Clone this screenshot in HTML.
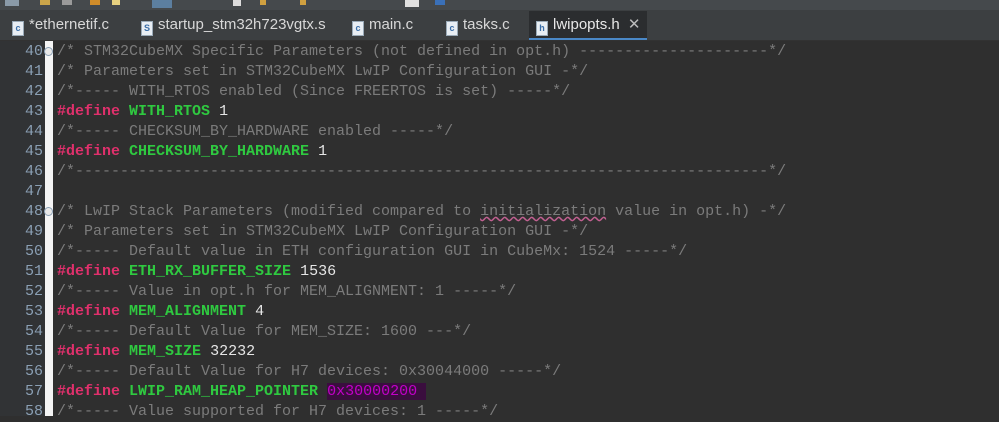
<!DOCTYPE html>
<html><head><meta charset="utf-8">
<style>
html,body{margin:0;padding:0;}
body{width:999px;height:416px;overflow:hidden;background:#2f2f2f;position:relative;font-family:"Liberation Sans",sans-serif;}
#tool{position:absolute;left:0;top:0;width:999px;height:10px;background:#45494c;}
#tabs{position:absolute;left:0;top:10px;width:999px;height:30px;background:#3c3f41;border-bottom:1px solid #323232;}
.tab{position:absolute;top:0;height:30px;line-height:30px;color:#d8d8d8;font-size:15px;white-space:nowrap;}
.ic{display:inline-block;width:10px;height:13px;background:#e8eef4;border:1px solid #9aaab8;vertical-align:-2px;margin-right:5px;font-size:9px;line-height:13px;text-align:center;color:#3a6ea8;font-weight:bold;}
#act{position:absolute;left:529px;top:11px;width:118px;height:29px;background:#2b2d2f;border-bottom:2px solid #4a88c7;box-sizing:border-box;}
#gut{position:absolute;left:0;top:41px;width:45px;height:375px;background:#313335;}
#bar{position:absolute;left:45px;top:41px;width:8px;height:375px;background:#f4f4f4;}
.ln{position:absolute;left:0;width:43px;text-align:right;color:#8a9fb4;font:15px/20px "Liberation Mono",monospace;}
.cd{position:absolute;left:57px;white-space:pre;font:15px/20px "Liberation Mono",monospace;color:#7b7b7b;}
.k{color:#e0306c;font-weight:bold;}
.m{color:#2fc940;font-weight:bold;}
.n{color:#e6e6e6;}
.p{color:#c200c8;background:#3a0e3e;}
.u{text-decoration:underline wavy #c06090;}
.fold{position:absolute;left:44px;width:7px;height:7px;border:1px solid #8a9fb4;border-radius:50%;background:#e8e8e8;}
</style></head><body>
<div id="tool">
<div style="position:absolute;left:5px;top:0;width:14px;height:6px;background:#8a9aa8"></div>
<div style="position:absolute;left:40px;top:0;width:10px;height:5px;background:#c9a44a"></div>
<div style="position:absolute;left:62px;top:0;width:10px;height:5px;background:#9a9a9a"></div>
<div style="position:absolute;left:90px;top:0;width:10px;height:5px;background:#d08c2a"></div>
<div style="position:absolute;left:112px;top:0;width:8px;height:5px;background:#e6d080"></div>
<div style="position:absolute;left:152px;top:0;width:20px;height:8px;background:#5c7fa0"></div>
<div style="position:absolute;left:233px;top:0;width:8px;height:6px;background:#ddd"></div>
<div style="position:absolute;left:260px;top:0;width:6px;height:5px;background:#d0a040"></div>
<div style="position:absolute;left:300px;top:0;width:6px;height:5px;background:#d0a040"></div>
<div style="position:absolute;left:405px;top:0;width:14px;height:7px;background:#e0e0e0"></div>
<div style="position:absolute;left:435px;top:0;width:10px;height:5px;background:#3a70b8"></div>
</div>
<div id="tabs">
<div class="tab" style="left:12px"><span class="ic">c</span>*ethernetif.c</div>
<div class="tab" style="left:141px"><span class="ic">S</span>startup_stm32h723vgtx.s</div>
<div class="tab" style="left:352px"><span class="ic">c</span>main.c</div>
<div class="tab" style="left:446px"><span class="ic">c</span>tasks.c</div>
</div>
<div id="act"></div>
<div class="tab" style="left:536px;top:10px;color:#e8e8e8"><span class="ic">h</span>lwipopts.h <span style="margin-left:4px;color:#bbb">✕</span></div>
<div id="gut"></div>
<div id="bar"></div>

<div class="ln" style="top:42px">40</div><div class="fold" style="top:47px"></div>
<div class="cd" style="top:42px">/* STM32CubeMX Specific Parameters (not defined in opt.h) ---------------------*/</div>
<div class="ln" style="top:62px">41</div><div class="cd" style="top:62px">/* Parameters set in STM32CubeMX LwIP Configuration GUI -*/</div>
<div class="ln" style="top:82px">42</div><div class="cd" style="top:82px">/*----- WITH_RTOS enabled (Since FREERTOS is set) -----*/</div>
<div class="ln" style="top:102px">43</div><div class="cd" style="top:102px"><span class="k">#define</span> <span class="m">WITH_RTOS</span> <span class="n">1</span></div>
<div class="ln" style="top:122px">44</div><div class="cd" style="top:122px">/*----- CHECKSUM_BY_HARDWARE enabled -----*/</div>
<div class="ln" style="top:142px">45</div><div class="cd" style="top:142px"><span class="k">#define</span> <span class="m">CHECKSUM_BY_HARDWARE</span> <span class="n">1</span></div>
<div class="ln" style="top:162px">46</div><div class="cd" style="top:162px">/*-----------------------------------------------------------------------------*/</div>
<div class="ln" style="top:182px">47</div>
<div class="ln" style="top:202px">48</div><div class="fold" style="top:207px"></div>
<div class="cd" style="top:202px">/* LwIP Stack Parameters (modified compared to <span class="u">initialization</span> value in opt.h) -*/</div>
<div class="ln" style="top:222px">49</div><div class="cd" style="top:222px">/* Parameters set in STM32CubeMX LwIP Configuration GUI -*/</div>
<div class="ln" style="top:242px">50</div><div class="cd" style="top:242px">/*----- Default value in ETH configuration GUI in CubeMx: 1524 -----*/</div>
<div class="ln" style="top:262px">51</div><div class="cd" style="top:262px"><span class="k">#define</span> <span class="m">ETH_RX_BUFFER_SIZE</span> <span class="n">1536</span></div>
<div class="ln" style="top:282px">52</div><div class="cd" style="top:282px">/*----- Value in opt.h for MEM_ALIGNMENT: 1 -----*/</div>
<div class="ln" style="top:302px">53</div><div class="cd" style="top:302px"><span class="k">#define</span> <span class="m">MEM_ALIGNMENT</span> <span class="n">4</span></div>
<div class="ln" style="top:322px">54</div><div class="cd" style="top:322px">/*----- Default Value for MEM_SIZE: 1600 ---*/</div>
<div class="ln" style="top:342px">55</div><div class="cd" style="top:342px"><span class="k">#define</span> <span class="m">MEM_SIZE</span> <span class="n">32232</span></div>
<div class="ln" style="top:362px">56</div><div class="cd" style="top:362px">/*----- Default Value for H7 devices: 0x30044000 -----*/</div>
<div class="ln" style="top:382px">57</div><div class="cd" style="top:382px"><span class="k">#define</span> <span class="m">LWIP_RAM_HEAP_POINTER</span> <span class="p">0x30000200 </span></div>
<div class="ln" style="top:402px">58</div><div class="cd" style="top:402px">/*----- Value supported for H7 devices: 1 -----*/</div>
</body></html>
